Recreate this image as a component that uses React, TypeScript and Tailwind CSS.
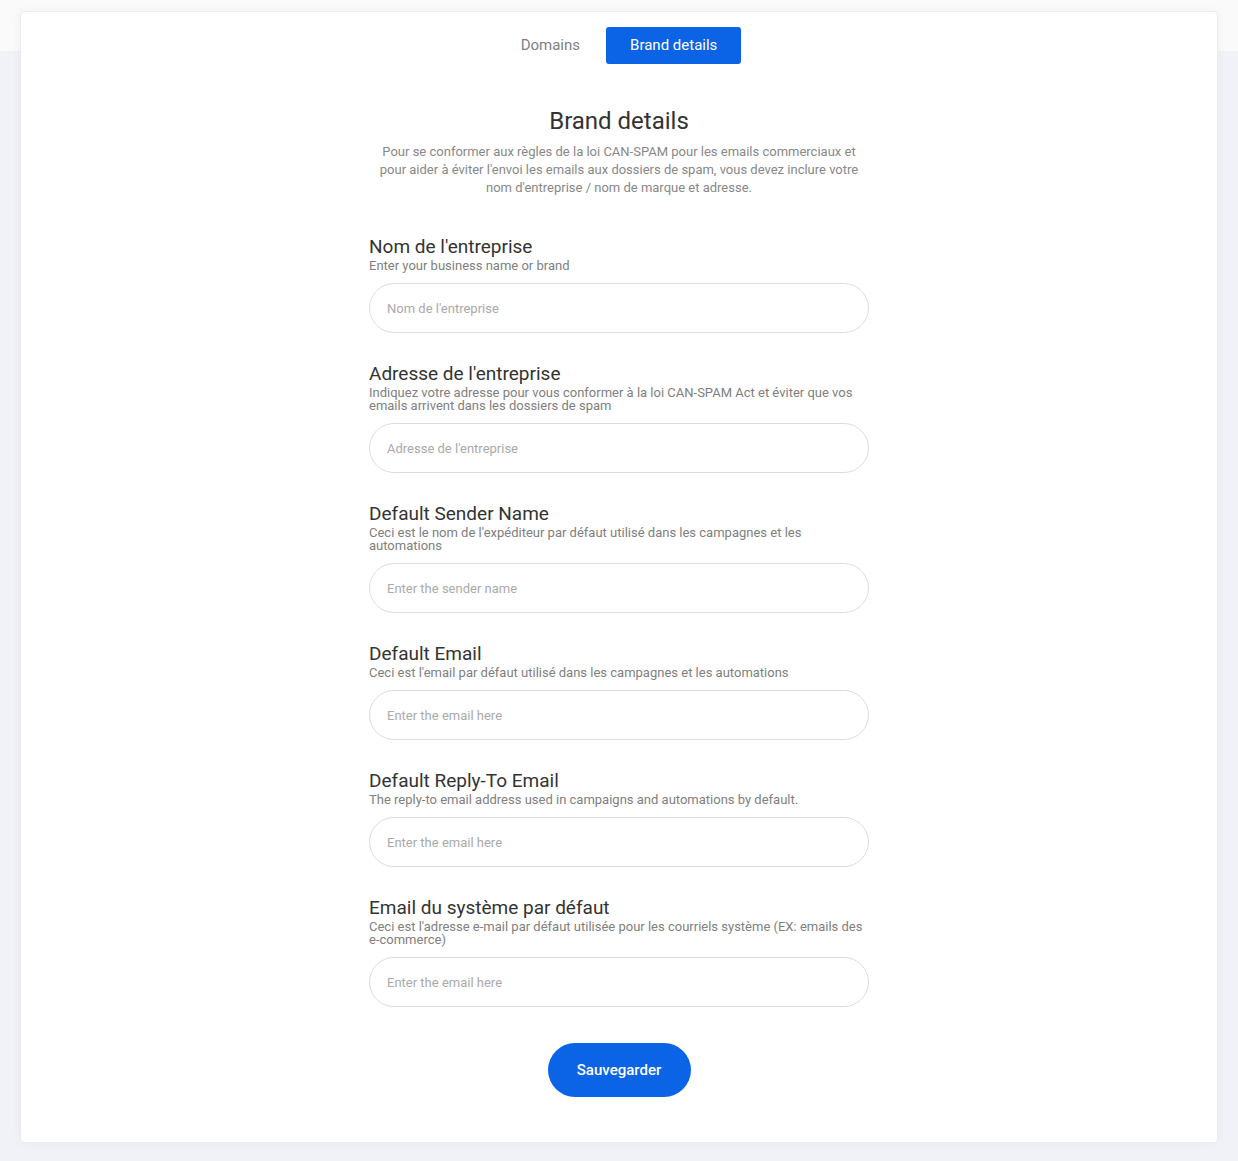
import React from "react";

const fields = [
  {
    label: "Nom de l'entreprise",
    help: "Enter your business name or brand",
    placeholder: "Nom de l'entreprise",
  },
  {
    label: "Adresse de l'entreprise",
    help: "Indiquez votre adresse pour vous conformer à la loi CAN-SPAM Act et éviter que vos emails arrivent dans les dossiers de spam",
    placeholder: "Adresse de l'entreprise",
  },
  {
    label: "Default Sender Name",
    help: "Ceci est le nom de l'expéditeur par défaut utilisé dans les campagnes et les automations",
    placeholder: "Enter the sender name",
  },
  {
    label: "Default Email",
    help: "Ceci est l'email par défaut utilisé dans les campagnes et les automations",
    placeholder: "Enter the email here",
  },
  {
    label: "Default Reply-To Email",
    help: "The reply-to email address used in campaigns and automations by default.",
    placeholder: "Enter the email here",
  },
  {
    label: "Email du système par défaut",
    help: "Ceci est l'adresse e-mail par défaut utilisée pour les courriels système (EX: emails des e-commerce)",
    placeholder: "Enter the email here",
  },
];

export default function App() {
  return (
    <div
      className="min-h-[1161px] bg-[linear-gradient(to_bottom,#fafafa_51px,#f1f2f7_51px)] pt-[11px] pb-[18px] px-5"
      style={{ fontFamily: "Roboto, 'Noto Sans', sans-serif" }}
    >
      <div className="bg-white rounded-[4px] border border-[#ececf0] shadow-[0_0_12px_rgba(0,0,0,0.04)] pt-[15px] pb-[45px] flex flex-col items-center">
        <div className="flex justify-center gap-[2px]">
          <button className="h-[37px] px-6 text-[15px] text-[#808080] rounded-[3px]">
            Domains
          </button>
          <button className="h-[37px] px-6 text-[15px] text-white bg-[#0b63e5] rounded-[3px]">
            Brand details
          </button>
        </div>

        <div className="w-[500px] mt-[44px] flex flex-col">
          <h1 className="text-center text-[24px] leading-[27px] text-[#333]">
            Brand details
          </h1>
          <p className="mt-[8px] text-center text-[13px] leading-[18px] text-[#888]">
            Pour se conformer aux règles de la loi CAN-SPAM pour les emails
            commerciaux et pour aider à éviter l'envoi les emails aux dossiers
            de spam, vous devez inclure votre nom d'entreprise / nom de marque
            et adresse.
          </p>

          <div className="mt-[38px] flex flex-col gap-[29px]">
            {fields.map((f, i) => (
              <div key={i} className="flex flex-col">
                <label className="pt-[1px] text-[19px] leading-[22px] text-[#333]">
                  {f.label}
                </label>
                <div className="mt-[1px] text-[13px] leading-[13px] text-[#808080]">
                  {f.help}
                </div>
                <input
                  type="text"
                  placeholder={f.placeholder}
                  className="mt-[11px] h-[50px] w-full rounded-full border border-[#dcdcdc] bg-white px-[17px] text-[13px] text-[#333] placeholder:text-[#aaa] outline-none"
                />
              </div>
            ))}
          </div>

          <div className="mt-9 flex justify-center">
            <button className="h-[54px] w-[143px] rounded-full bg-[#0b63e5] text-white text-[15px] font-medium">
              Sauvegarder
            </button>
          </div>
        </div>
      </div>
    </div>
  );
}
